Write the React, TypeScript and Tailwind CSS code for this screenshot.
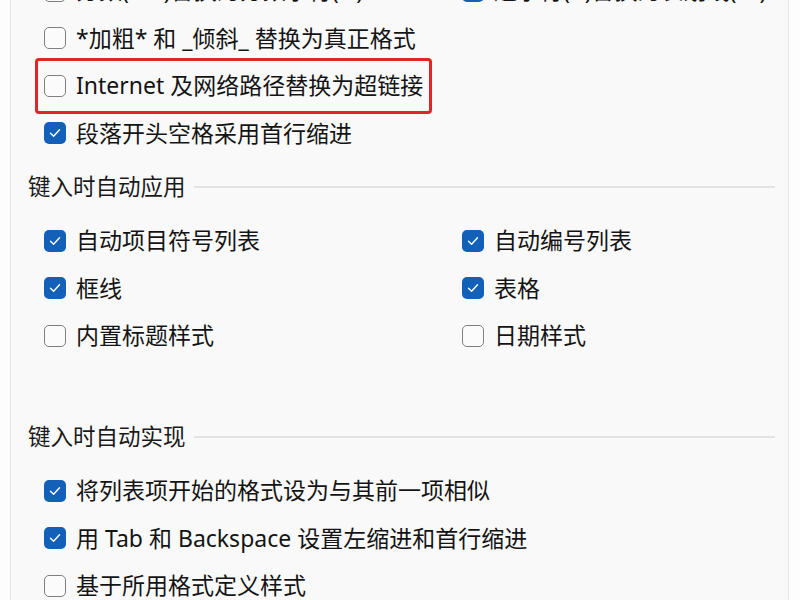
import React from "react";

type Item = { label: string; checked: boolean; highlight?: boolean };

const font = { fontFamily: '"Noto Sans", "Noto Sans CJK SC", sans-serif' };

function Box({ checked }: { checked: boolean }) {
  if (checked) {
    return (
      <span className="flex h-[22px] w-[22px] shrink-0 items-center justify-center rounded-[5px] bg-[#1360b8]">
        <svg width="14" height="14" viewBox="0 0 14 14" fill="none">
          <path d="M2.5 7.3 L5.6 10.2 L11.5 3.8" stroke="white" strokeWidth="1.4" strokeLinecap="round" strokeLinejoin="round" />
        </svg>
      </span>
    );
  }
  return <span className="h-[22px] w-[22px] shrink-0 rounded-[5px] border border-[#7f7f7f] bg-[#fbfbfb]" />;
}

function Row({ item }: { item?: Item }) {
  if (!item) return <div className="h-[47.5px]" />;
  return (
    <div className="relative flex h-[47.5px] items-center gap-[10px]">
      {item.highlight && (
        <span className="pointer-events-none absolute left-[-9px] top-[-4px] h-[56px] w-[397px] rounded-[4px] border-[3px] border-[#e3232a]" />
      )}
      <Box checked={item.checked} />
      <span className="whitespace-nowrap text-[23px] leading-none text-[#141414]">{item.label}</span>
    </div>
  );
}

function Header({ title }: { title: string }) {
  return (
    <div className="flex h-[60px] items-center gap-[8px] pl-[17px] pr-[13px]">
      <span className="whitespace-nowrap text-[22.5px] leading-none text-[#1a1a1a]">{title}</span>
      <span className="h-[2px] flex-1 bg-[#e3e3e3]" />
    </div>
  );
}

function Grid({ rows }: { rows: [Item | undefined, Item | undefined][] }) {
  return (
    <div className="grid grid-cols-[418px_1fr] pl-[33px]">
      {rows.map(([l, r], i) => (
        <React.Fragment key={i}>
          <Row item={l} />
          <Row item={r} />
        </React.Fragment>
      ))}
    </div>
  );
}

export default function App() {
  return (
    <div className="h-[600px] w-[800px] overflow-hidden bg-[#fdfdfd]" style={font}>
      <div className="ml-[10px] mr-[11px] h-[640px] border-x border-[#e6e6e6] bg-[#f9f9f9]">
        <div className="mt-[-33px]">
          <Grid
            rows={[
              [
                { label: "分数(1/2)替换为分数字符(½)", checked: false },
                { label: "连字符(--)替换为长划线(—)", checked: true },
              ],
              [{ label: "*加粗* 和 _倾斜_ 替换为真正格式", checked: false }, undefined],
              [{ label: "Internet 及网络路径替换为超链接", checked: false, highlight: true }, undefined],
              [{ label: "段落开头空格采用首行缩进", checked: true }, undefined],
            ]}
          />
          <Header title="键入时自动应用" />
          <Grid
            rows={[
              [
                { label: "自动项目符号列表", checked: true },
                { label: "自动编号列表", checked: true },
              ],
              [
                { label: "框线", checked: true },
                { label: "表格", checked: true },
              ],
              [
                { label: "内置标题样式", checked: false },
                { label: "日期样式", checked: false },
              ],
              [undefined, undefined],
            ]}
          />
          <Header title="键入时自动实现" />
          <Grid
            rows={[
              [{ label: "将列表项开始的格式设为与其前一项相似", checked: true }, undefined],
              [{ label: "用 Tab 和 Backspace 设置左缩进和首行缩进", checked: true }, undefined],
              [{ label: "基于所用格式定义样式", checked: false }, undefined],
            ]}
          />
        </div>
      </div>
    </div>
  );
}
